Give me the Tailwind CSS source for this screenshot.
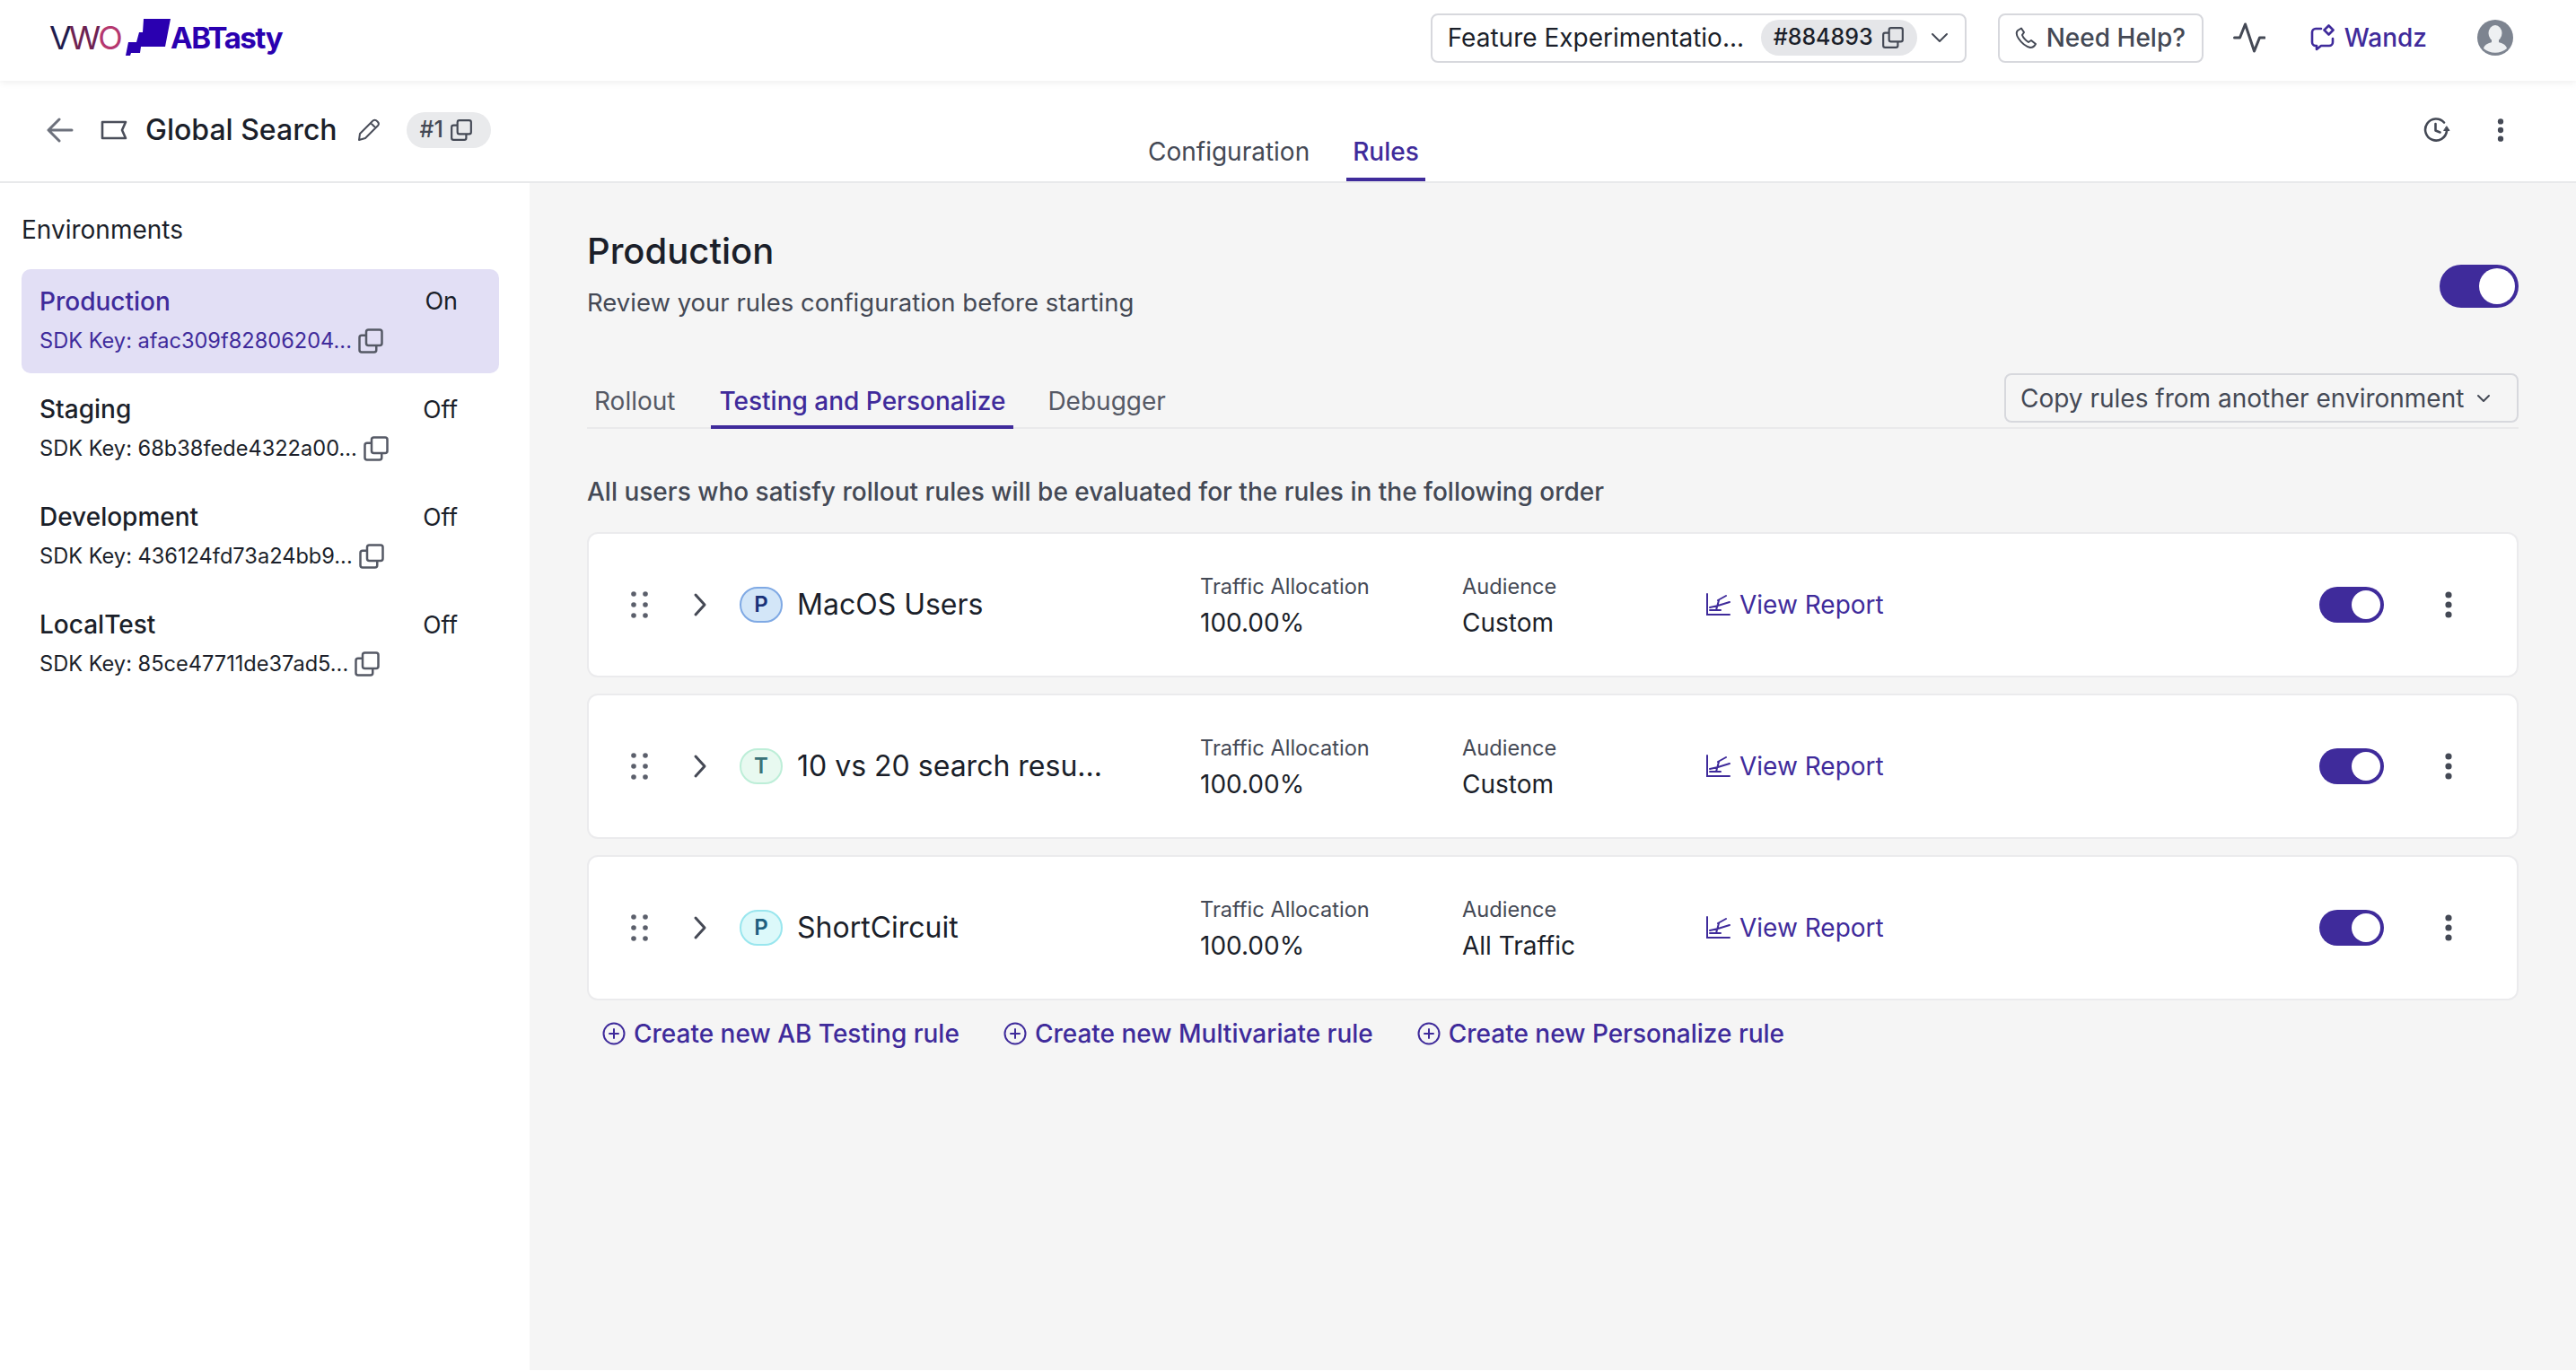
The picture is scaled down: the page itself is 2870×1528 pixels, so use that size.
<!DOCTYPE html>
<html lang="en">

<head>
    <meta charset="UTF-8">
    <title>Global Search - Rules</title>
    <script src="https://cdn.jsdelivr.net/npm/@tailwindcss/browser@4"></script>
</head>

<body class="bg-white h-screen overflow-hidden font-['Inter',sans-serif] text-[#1b1f2a]">
    <svg class="hidden">
        <symbol id="copy" viewBox="0 0 24 24" fill="none" stroke="currentColor" stroke-width="2" stroke-linejoin="round">
            <rect x="8" y="2" width="14" height="14" rx="2"></rect>
            <path d="M8 7H4a2 2 0 0 0-2 2v11a2 2 0 0 0 2 2h11a2 2 0 0 0 2-2v-4"></path>
        </symbol>
        <symbol id="grip" viewBox="0 0 20 32" fill="#5b5f6b">
            <circle cx="3" cy="4" r="2.8"></circle><circle cx="16" cy="4" r="2.8"></circle>
            <circle cx="3" cy="16" r="2.8"></circle><circle cx="16" cy="16" r="2.8"></circle>
            <circle cx="3" cy="28" r="2.8"></circle><circle cx="16" cy="28" r="2.8"></circle>
        </symbol>
        <symbol id="chevron" viewBox="0 0 16 28" fill="none" stroke="#454955" stroke-width="3" stroke-linecap="round" stroke-linejoin="round">
            <path d="M3 3l10 11L3 25"></path>
        </symbol>
        <symbol id="kebab" viewBox="0 0 8 32" fill="#444955">
            <circle cx="4" cy="5" r="3.6"></circle><circle cx="4" cy="16" r="3.6"></circle><circle cx="4" cy="27" r="3.6"></circle>
        </symbol>
        <symbol id="chart" viewBox="0 0 28 28" fill="none" stroke="#3f2b9b" stroke-width="2" stroke-linecap="round">
            <path d="M2 2v23h25"></path>
            <path d="M14 9l9-5M5 17l9-2 13-4M15 9l-3 11M5 20h12"></path>
        </symbol>
        <symbol id="plus" viewBox="0 0 26 26" fill="none" stroke="#3f2b9b" stroke-width="2" stroke-linecap="round">
            <circle cx="13" cy="13" r="11.5"></circle>
            <path d="M13 8v10M8 13h10"></path>
        </symbol>
    </svg>

    <!-- top bar -->
    <header class="relative z-10 h-[90px] flex items-center pb-[6px] pl-[55px] pr-[70px] bg-white shadow-[0_2px_8px_rgba(0,0,0,0.07)]">
        <div class="flex items-center">
            <span class="flex text-[36px] leading-none font-normal tracking-[-3px] w-[85px]">
                <span class="text-[#1f1b4d]">V</span><span class="text-[#6e2252]">W</span><span class="text-[#b5386f]">O</span>
            </span>
            <svg class="w-[50px] h-[42px]" viewBox="0 0 50 42" fill="#2a00b0">
                <path d="M20 0h30l-6 31H17l-1 7H6l-1 3H0l3-15h9l3-11h4z"></path>
            </svg>
            <span class="text-[33px] leading-none font-bold tracking-[-1.5px] text-[#2a00b0]">ABTasty</span>
        </div>

        <div class="ml-auto flex items-center">
            <div class="w-[597px] h-[55px] rounded-lg border-2 border-[#d7d8dd] flex items-center pl-[17px] text-[28px]">
                <span class="w-[349px] whitespace-nowrap">Feature Experimentatio...</span>
                <span class="w-[174px] h-[40px] bg-[#e5e6e9] rounded-full flex items-center pl-[14px] text-[25px] font-medium">
                    #884893
                    <svg class="w-[26px] h-[26px] ml-[9px] text-[#444955]"><use href="#copy"></use></svg>
                </span>
                <svg class="w-[20px] h-[12px] ml-[15px]" viewBox="0 0 20 12" fill="none" stroke="#444955" stroke-width="2" stroke-linecap="round" stroke-linejoin="round"><path d="M2 2l8 8 8-8"></path></svg>
            </div>
            <div class="w-[229px] h-[55px] ml-[35px] rounded-lg border-2 border-[#d7d8dd] flex items-center pl-[17px] text-[28px] text-[#444955] font-medium whitespace-nowrap">
                <svg class="w-[24px] h-[26px] mr-[11px]" viewBox="0 0 24 24" fill="none" stroke="#444955" stroke-width="2" stroke-linejoin="round"><path d="M7 1.5L3 4C1 6 2 10 4 13c4 6 9 9 13 10 3 0 5-2 6-4l-5-4-3 2c-3-2-6-5-7-8l2-3z"></path></svg>
                Need Help?
            </div>
            <svg class="w-[36px] h-[34px] ml-[33px]" viewBox="0 0 36 34" fill="none" stroke="#444955" stroke-width="3" stroke-linecap="round" stroke-linejoin="round"><path d="M1.5 17h6l6-15 10 30 6-15h5.500"></path></svg>
            <svg class="w-[30px] h-[30px] ml-[50px]" viewBox="0 0 30 30" fill="none" stroke="#3f2b9b" stroke-width="2.6" stroke-linejoin="round" stroke-linecap="round">
                <path d="M12 5H6a4 4 0 0 0-4 4v11a4 4 0 0 0 4 4h1v4l5-4h9a4 4 0 0 0 4-4v-4"></path>
                <path d="M20.500 1.500l5 5-5 5-5-5z"></path>
            </svg>
            <span class="ml-[8px] text-[28px] font-medium text-[#3f2b9b]">Wandz</span>
            <svg class="w-[40px] h-[40px] ml-[56px]" viewBox="0 0 40 40">
                <circle cx="20" cy="20" r="20" fill="#7d8490"></circle>
                <ellipse cx="20" cy="15" rx="7.500" ry="9" fill="#eef0f2"></ellipse>
                <path d="M7 32c1-5 7-6 9-7v-3h8v3c2 1 8 2 9 7a20 20 0 0 1-26 0z" fill="#eef0f2"></path>
            </svg>
        </div>
    </header>

    <!-- page title + tabs -->
    <div class="relative h-[114px] border-b-2 border-[#e8e9eb] flex items-center pb-[2px] pl-[52px] pr-[80px] -mb-[1px]">
        <svg class="w-[30px] h-[28px]" viewBox="0 0 30 28" fill="none" stroke="#6d717c" stroke-width="3" stroke-linecap="round" stroke-linejoin="round"><path d="M28 14H3M14 2L2 14l12 12"></path></svg>
        <svg class="w-[30px] h-[22px] ml-[30px]" viewBox="0 0 30 22" fill="none" stroke="#4a4e5a" stroke-width="2.6" stroke-linejoin="round"><path d="M2 2h26l-4 9 4 9H2z"></path></svg>
        <span class="ml-[20px] text-[32px] font-medium">Global Search</span>
        <svg class="w-[26px] h-[26px] ml-[22px]" viewBox="0 0 26 26" fill="none" stroke="#4a4e5a" stroke-width="2" stroke-linejoin="round"><path d="M2 24l1-7L17 3a3 3 0 0 1 5 0l1 1a3 3 0 0 1 0 4L9 22zM15 5l6 6"></path></svg>
        <span class="ml-[29px] w-[94px] h-[40px] rounded-full bg-[#e9eaec] flex items-center pl-[15px] text-[25px] font-medium text-[#444955]">
            #1
            <svg class="w-[26px] h-[26px] ml-[7px]"><use href="#copy"></use></svg>
        </span>
        <nav class="absolute left-[1279px] bottom-0 flex h-[60px] text-[28px]">
            <span class="text-[#444955] pt-[6px]">Configuration</span>
            <span class="ml-[41px] px-[7px] pt-[6px] border-b-4 border-[#3f2b9b] font-medium text-[#3f2b9b]">Rules</span>
        </nav>
        <svg class="ml-auto w-[30px] h-[30px]" viewBox="0 0 30 30" fill="none" stroke="#444955" stroke-width="2.6" stroke-linecap="round" stroke-linejoin="round">
            <path d="M23 6.500A12 12 0 1 0 26 16M13.500 8v7.500l5 2"></path>
            <path d="M26 11l3 4.500h-6z" fill="#444955" stroke-width="1"></path>
        </svg>
        <svg class="w-[8px] h-[28px] ml-[52px]"><use href="#kebab"></use></svg>
    </div>

    <div class="flex h-[1324px]">
        <!-- environments -->
        <aside class="w-[590px] shrink-0 pl-[24px] pr-[34px] pt-[36px] bg-white">
            <h2 class="text-[28px] leading-[34px] mb-[27px]">Environments</h2>
            <div class="flex flex-col gap-[4px]">
                <div class="h-[116px] rounded-[10px] bg-[#e2dff5] pl-[20px] pr-[46px] pt-[18px] text-[#3f2b9b]">
                    <div class="flex justify-between text-[28px] leading-[36px]"><span class="font-medium">Production</span><span class="text-[27px] text-[#1b1f2a]">On</span></div>
                    <div class="flex items-center mt-[8px] text-[23.6px] leading-[36px]">SDK Key: afac309f82806204...<svg class="w-[30px] h-[30px] ml-[6px] text-[#555965]"><use href="#copy"></use></svg></div>
                </div>
                <div class="h-[116px] rounded-[10px] pl-[20px] pr-[46px] pt-[18px]">
                    <div class="flex justify-between text-[28px] leading-[36px]"><span class="font-medium">Staging</span><span class="text-[26.5px]">Off</span></div>
                    <div class="flex items-center mt-[8px] text-[23.6px] leading-[36px]">SDK Key: 68b38fede4322a00...<svg class="w-[30px] h-[30px] ml-[6px] text-[#555965]"><use href="#copy"></use></svg></div>
                </div>
                <div class="h-[116px] rounded-[10px] pl-[20px] pr-[46px] pt-[18px]">
                    <div class="flex justify-between text-[28px] leading-[36px]"><span class="font-medium">Development</span><span class="text-[26.5px]">Off</span></div>
                    <div class="flex items-center mt-[8px] text-[23.6px] leading-[36px]">SDK Key: 436124fd73a24bb9...<svg class="w-[30px] h-[30px] ml-[6px] text-[#555965]"><use href="#copy"></use></svg></div>
                </div>
                <div class="h-[116px] rounded-[10px] pl-[20px] pr-[46px] pt-[18px]">
                    <div class="flex justify-between text-[28px] leading-[36px]"><span class="font-medium">LocalTest</span><span class="text-[26.5px]">Off</span></div>
                    <div class="flex items-center mt-[8px] text-[23.6px] leading-[36px]">SDK Key: 85ce47711de37ad5...<svg class="w-[30px] h-[30px] ml-[6px] text-[#555965]"><use href="#copy"></use></svg></div>
                </div>
            </div>
        </aside>

        <!-- rules -->
        <main class="flex-1 bg-[#f5f5f5] pl-[64px] pr-[64px] pt-[52px]">
            <div class="flex justify-between items-start h-[130px]">
                <div>
                    <h1 class="text-[40px] leading-[50px] font-medium">Production</h1>
                    <p class="mt-[12px] text-[27.5px] leading-[40px] text-[#444955]">Review your rules configuration before starting</p>
                </div>
                <span class="mt-[40px] w-[88px] h-[48px] rounded-full bg-[#3f2b9b] flex items-center justify-end pr-[4px]"><span class="w-[40px] h-[40px] rounded-full bg-white"></span></span>
            </div>

            <div class="flex items-end h-[62px] border-b-2 border-[#e9e9eb] mt-[31px]">
                <div class="flex h-[64px] -mb-[2px] text-[28px]">
                    <span class="pl-[8px] pr-[13px] pt-[12px] text-[#555965]">Rollout</span>
                    <span class="ml-[27px] px-[9px] pt-[12px] border-b-4 border-[#3f2b9b] font-medium text-[#3f2b9b]">Testing and Personalize</span>
                    <span class="ml-[38px] pt-[12px] text-[#555965]">Debugger</span>
                </div>
                <div class="ml-auto mb-[5px] w-[573px] h-[55px] rounded-lg border-2 border-[#d7d8dd] flex items-center pl-[16px] text-[28px] text-[#444955]">
                    Copy rules from another environment
                    <svg class="w-[16px] h-[10px] ml-[14px]" viewBox="0 0 16 10" fill="none" stroke="#444955" stroke-width="2" stroke-linecap="round" stroke-linejoin="round"><path d="M2 2l6 6 6-6"></path></svg>
                </div>
            </div>

            <p class="mt-[50px] text-[28px] leading-[40px] font-medium text-[#444955]">All users who satisfy rollout rules will be evaluated for the rules in the following order</p>

            <div class="mt-[25px] flex flex-col gap-[18px]">
                <div class="h-[162px] rounded-[12px] bg-white border-2 border-[#ebebed] flex items-center">
                    <svg class="w-[20px] h-[32px] ml-[47px]"><use href="#grip"></use></svg>
                    <svg class="w-[16px] h-[28px] ml-[49px]"><use href="#chevron"></use></svg>
                    <span class="ml-[36px] w-[48px] h-[40px] rounded-full border-2 border-[#7fa9e4] bg-[#d3e6f8] flex items-center justify-center text-[24px] font-semibold text-[#1a3278]">P</span>
                    <span class="ml-[16px] w-[449px] text-[32px] whitespace-nowrap">MacOS Users</span>
                    <div class="w-[292px]"><div class="text-[23.6px] leading-[40px] text-[#444955]">Traffic Allocation</div><div class="text-[28px] leading-[40px]">100.00%</div></div>
                    <div class="w-[271px]"><div class="text-[23.6px] leading-[40px] text-[#444955]">Audience</div><div class="text-[28px] leading-[40px]">Custom</div></div>
                    <svg class="w-[28px] h-[28px]"><use href="#chart"></use></svg>
                    <span class="ml-[10px] w-[646px] text-[28px] text-[#3f2b9b]">View Report</span>
                    <span class="w-[72px] h-[40px] rounded-full bg-[#3f2b9b] flex items-center justify-end pr-[4px]"><span class="w-[32px] h-[32px] rounded-full bg-white"></span></span>
                    <svg class="w-[8px] h-[32px] ml-[68px]"><use href="#kebab"></use></svg>
                </div>
                <div class="h-[162px] rounded-[12px] bg-white border-2 border-[#ebebed] flex items-center">
                    <svg class="w-[20px] h-[32px] ml-[47px]"><use href="#grip"></use></svg>
                    <svg class="w-[16px] h-[28px] ml-[49px]"><use href="#chevron"></use></svg>
                    <span class="ml-[36px] w-[48px] h-[40px] rounded-full border-2 border-[#bdeed8] bg-[#e8f9f0] flex items-center justify-center text-[24px] font-semibold text-[#3a7378]">T</span>
                    <span class="ml-[16px] w-[449px] text-[32px] whitespace-nowrap">10 vs 20 search resu...</span>
                    <div class="w-[292px]"><div class="text-[23.6px] leading-[40px] text-[#444955]">Traffic Allocation</div><div class="text-[28px] leading-[40px]">100.00%</div></div>
                    <div class="w-[271px]"><div class="text-[23.6px] leading-[40px] text-[#444955]">Audience</div><div class="text-[28px] leading-[40px]">Custom</div></div>
                    <svg class="w-[28px] h-[28px]"><use href="#chart"></use></svg>
                    <span class="ml-[10px] w-[646px] text-[28px] text-[#3f2b9b]">View Report</span>
                    <span class="w-[72px] h-[40px] rounded-full bg-[#3f2b9b] flex items-center justify-end pr-[4px]"><span class="w-[32px] h-[32px] rounded-full bg-white"></span></span>
                    <svg class="w-[8px] h-[32px] ml-[68px]"><use href="#kebab"></use></svg>
                </div>
                <div class="h-[162px] rounded-[12px] bg-white border-2 border-[#ebebed] flex items-center">
                    <svg class="w-[20px] h-[32px] ml-[47px]"><use href="#grip"></use></svg>
                    <svg class="w-[16px] h-[28px] ml-[49px]"><use href="#chevron"></use></svg>
                    <span class="ml-[36px] w-[48px] h-[40px] rounded-full border-2 border-[#99e6ee] bg-[#dcf9fa] flex items-center justify-center text-[24px] font-semibold text-[#20607f]">P</span>
                    <span class="ml-[16px] w-[449px] text-[32px] whitespace-nowrap">ShortCircuit</span>
                    <div class="w-[292px]"><div class="text-[23.6px] leading-[40px] text-[#444955]">Traffic Allocation</div><div class="text-[28px] leading-[40px]">100.00%</div></div>
                    <div class="w-[271px]"><div class="text-[23.6px] leading-[40px] text-[#444955]">Audience</div><div class="text-[28px] leading-[40px]">All Traffic</div></div>
                    <svg class="w-[28px] h-[28px]"><use href="#chart"></use></svg>
                    <span class="ml-[10px] w-[646px] text-[28px] text-[#3f2b9b]">View Report</span>
                    <span class="w-[72px] h-[40px] rounded-full bg-[#3f2b9b] flex items-center justify-end pr-[4px]"><span class="w-[32px] h-[32px] rounded-full bg-white"></span></span>
                    <svg class="w-[8px] h-[32px] ml-[68px]"><use href="#kebab"></use></svg>
                </div>
            </div>

            <div class="mt-[17px] pl-[17px] flex items-center text-[28px] leading-[40px] font-medium text-[#3f2b9b]">
                <svg class="w-[26px] h-[26px] mr-[9px]"><use href="#plus"></use></svg>
                <span>Create new AB Testing rule</span>
                <svg class="w-[26px] h-[26px] ml-[49px] mr-[9px]"><use href="#plus"></use></svg>
                <span>Create new Multivariate rule</span>
                <svg class="w-[26px] h-[26px] ml-[49px] mr-[9px]"><use href="#plus"></use></svg>
                <span>Create new Personalize rule</span>
            </div>
        </main>
    </div>
</body>

</html>
